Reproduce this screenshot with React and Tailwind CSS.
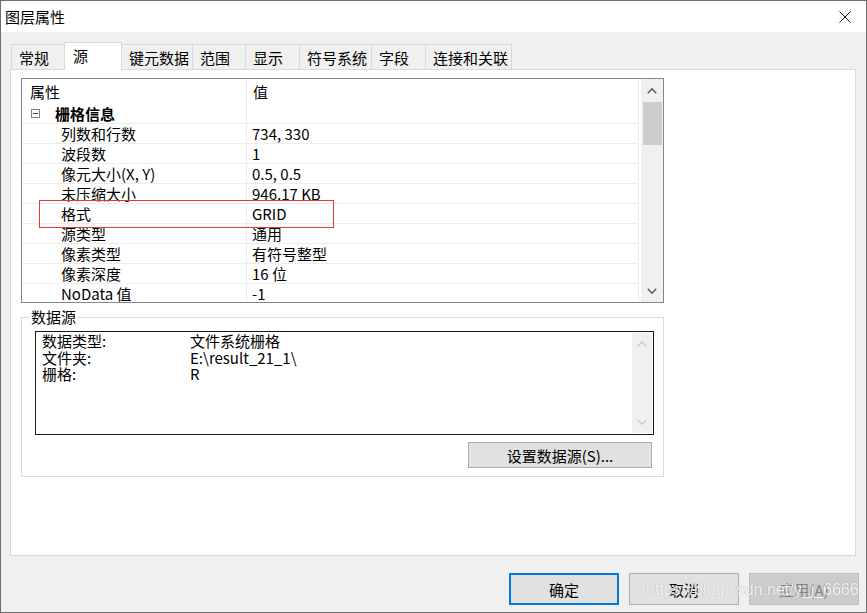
import React from "react";

const rows = [
  ["列数和行数", "734, 330"],
  ["波段数", "1"],
  ["像元大小(X, Y)", "0.5, 0.5"],
  ["未压缩大小", "946.17 KB"],
  ["格式", "GRID"],
  ["源类型", "通用"],
  ["像素类型", "有符号整型"],
  ["像素深度", "16 位"],
  ["NoData 值", "-1"],
];

const tabs = [
  ["常规", 54],
  ["源", 58],
  ["键元数据", 72],
  ["范围", 54],
  ["显示", 55],
  ["符号系统", 73],
  ["字段", 55],
  ["连接和关联", 87],
];

function Chevron({ up, color, w = 10, h = 6, sw = 1.6 }) {
  return (
    <svg width={w} height={h} viewBox={`0 0 ${w} ${h}`}>
      {up ? (
        <polyline points={`0.8,${h - 0.8} ${w / 2},0.8 ${w - 0.8},${h - 0.8}`} fill="none" stroke={color} strokeWidth={sw} />
      ) : (
        <polyline points={`0.8,0.8 ${w / 2},${h - 0.8} ${w - 0.8},0.8`} fill="none" stroke={color} strokeWidth={sw} />
      )}
    </svg>
  );
}

export default function App() {
  return (
    <div className="w-[867px] h-[613px] bg-[#f0f0f0] border border-[#6e6e6e] flex flex-col relative overflow-hidden text-black font-['Noto_Sans_CJK_SC','Noto_Sans',sans-serif]">
      {/* title bar */}
      <div className="h-[31px] bg-white flex items-center justify-between pl-[4px] pr-[15px] shrink-0">
        <span className="text-[15px] leading-none">图层属性</span>
        <svg width="12" height="12" viewBox="0 0 12 12">
          <path d="M0.5 0.5 L11.5 11.5 M11.5 0.5 L0.5 11.5" stroke="#111" strokeWidth="1" />
        </svg>
      </div>

      {/* body */}
      <div className="flex-1 flex flex-col pl-[9px] pt-[10px]">
        {/* tabs */}
        <div className="flex items-end h-[27px] pl-[1px] relative z-10">
          {tabs.map(([t, w], i) =>
            i === 1 ? (
              <div
                key={t}
                style={{ width: w }}
                className="h-[28px] -mb-px -ml-px bg-white border border-b-0 border-[#d9d9d9] flex items-center pl-[8px] pb-[3px] text-[15px] leading-none"
              >
                {t}
              </div>
            ) : (
              <div
                key={t}
                style={{ width: w }}
                className={`h-[25px] ${i === 0 ? "" : "-ml-px"} bg-[#f0f0f0] border border-b-0 border-[#d9d9d9] flex items-center pl-[7px] text-[15px] leading-none`}
              >
                {t}
              </div>
            )
          )}
        </div>

        {/* panel */}
        <div className="w-[846px] h-[487px] bg-white border border-[#d9d9d9] pl-[10px] pt-[8px] flex flex-col">
          {/* property grid */}
          <div className="relative w-[643px] h-[225px] border border-[#828790] flex">
            <div className="flex-1 overflow-hidden pr-[2px]">
              <div className="border-r border-[#ececec] h-full">
                <div className="flex h-[25px] items-center text-[15px] leading-none">
                  <div className="w-[225px] h-full border-r border-[#ececec] flex items-center pl-[8px]">属性</div>
                  <div className="pl-[6px]">值</div>
                </div>
                <div className="flex h-[20px] items-center border-b border-[#ececec] text-[15px] leading-none">
                  <div className="w-[225px] h-full border-r border-[#ececec] flex items-center pl-[9px]">
                    <div className="w-[9px] h-[9px] border border-[#848484] flex items-center justify-center">
                      <div className="w-[5px] h-px bg-[#444]" />
                    </div>
                    <span className="ml-[15px] font-bold">栅格信息</span>
                  </div>
                  <div />
                </div>
                {rows.map(([k, v]) => (
                  <div key={k} className="flex h-[20px] items-center border-b border-[#ececec] text-[15px] leading-none">
                    <div className="w-[225px] h-full border-r border-[#ececec] flex items-center pl-[39px]">{k}</div>
                    <div className="pl-[5px]">{v}</div>
                  </div>
                ))}
              </div>
            </div>
            {/* scrollbar */}
            <div className="w-[22px] bg-[#f0f0f0] flex flex-col items-center">
              <div className="h-[23px] w-full flex items-center justify-center">
                <Chevron up color="#606060" />
              </div>
              <div className="w-[19px] h-[43px] bg-[#cdcdcd]" />
              <div className="flex-1" />
              <div className="h-[23px] w-full flex items-center justify-center">
                <Chevron color="#606060" />
              </div>
            </div>
            {/* red highlight */}
            <div className="absolute left-[17px] top-[121px] w-[295px] h-[28px] border border-[#e53935]" />
          </div>

          {/* data source group box */}
          <fieldset className="w-[643px] mt-[6px] border border-[#dcdcdc] pl-[13px] pr-[9px] pb-[8px]">
            <legend className="ml-[-5px] px-[1px] text-[15px] leading-[16px]">数据源</legend>
            <div className="mt-[6px] h-[104px] border border-[#1a1a1a] flex">
              <div className="flex-1 pl-[6px] pt-[1px] text-[15px] leading-[16.5px]">
                {[
                  ["数据类型:", "文件系统栅格"],
                  ["文件夹:", "E:\\result_21_1\\"],
                  ["栅格:", "R"],
                ].map(([a, b]) => (
                  <div key={a} className="flex">
                    <div className="w-[148px]">{a}</div>
                    <div>{b}</div>
                  </div>
                ))}
              </div>
              <div className="w-[20px] my-[1px] mr-px bg-[#f0f0f0] flex flex-col items-center justify-between py-[8px]">
                <Chevron up color="#c4c4c4" sw={1.2} />
                <Chevron color="#c4c4c4" sw={1.2} />
              </div>
            </div>
            <div className="flex justify-end mt-[7px] pr-[2px]">
              <button className="w-[184px] h-[26px] bg-[#e1e1e1] border border-[#adadad] text-[15px] leading-none flex items-center justify-center">
                设置数据源(S)...
              </button>
            </div>
          </fieldset>
        </div>

        {/* bottom buttons */}
        <div className="flex justify-end gap-[10px] pr-[7px] mt-[17px]">
          <button className="w-[110px] h-[32px] bg-[#e1e1e1] border-2 border-[#0078d7] text-[15px] leading-none flex items-center justify-center">
            确定
          </button>
          <button className="w-[110px] h-[32px] bg-[#e1e1e1] border border-[#adadad] text-[15px] leading-none flex items-center justify-center">
            取消
          </button>
          <button className="w-[110px] h-[32px] bg-[#cccccc] border border-[#bfbfbf] text-[#838383] text-[15px] leading-none flex items-center justify-center">
            应用(A)
          </button>
        </div>
      </div>

      {/* watermark */}
      <div className="absolute left-[645px] top-[581px] text-[16px] leading-none text-white/90 font-['Liberation_Sans',sans-serif] [text-shadow:0_0_1px_rgba(0,0,0,0.35)] pointer-events-none">
        https://blog.csdn.net/y_j_6666
      </div>
    </div>
  );
}
